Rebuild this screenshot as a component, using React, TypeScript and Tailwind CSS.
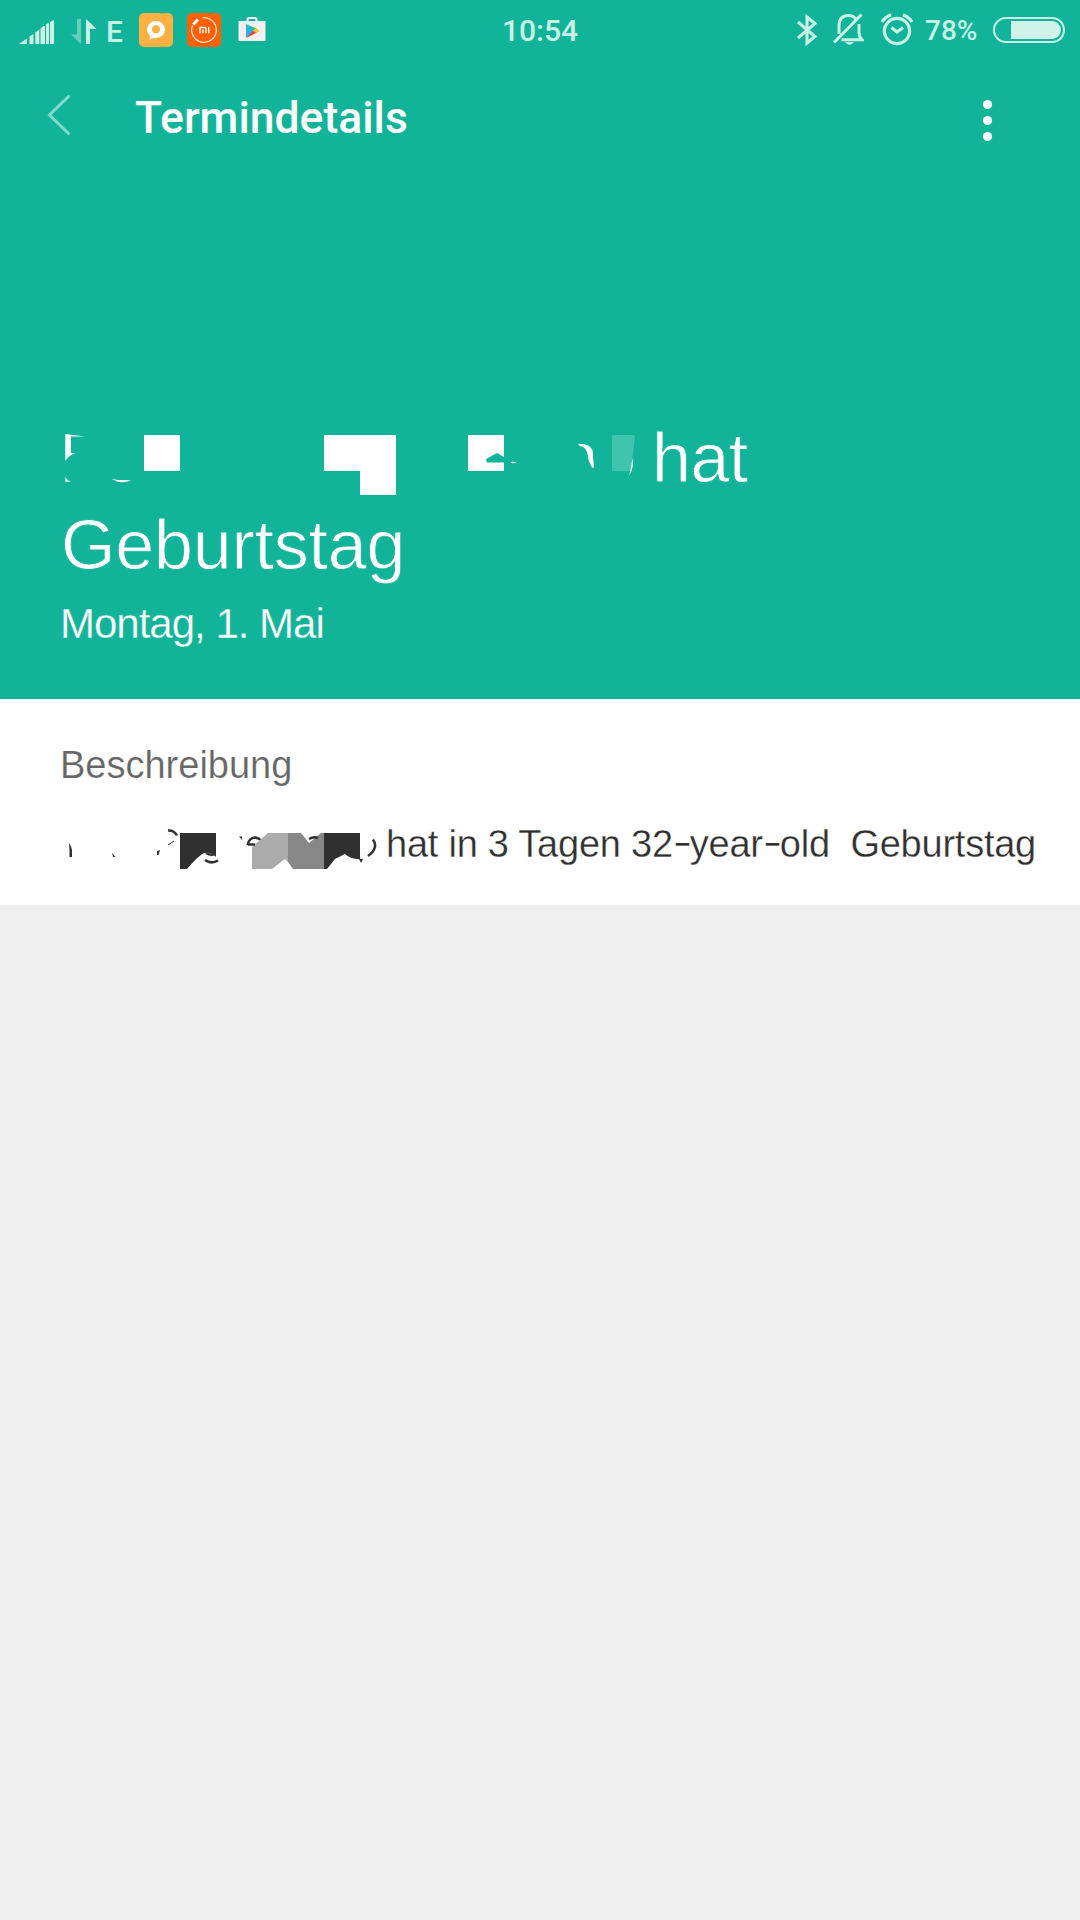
const StatusLeft = () => {
    return (
        <div className="flex items-center h-[60px] pl-[19px] w-[502px]">
            {/* signal */}
            <svg className="w-[36px] h-[60px] mr-[16px]" viewBox="19 0 36 60" fill="#c9f2e6">
                <path d="M19 44L27 38.5V44ZM29.5 44V36.5L33.5 34V44ZM35.3 44V32.5L39.3 29.5V44ZM40.500 44V28.5L43.5 26H45V44ZM46 44V24.5L49 22.5V44ZM50 44V22L54 20V44Z" />
            </svg>
            {/* data arrows */}
            <svg className="w-[26px] h-[60px] mr-[10px]" viewBox="71 0 26 60">
                <path d="M77 19H81V44L71 34.5H77Z" fill="#66d0bc" />
                <path d="M86 19L96.500 29H90V44H86Z" fill="#c9f2e6" />
            </svg>
            <p className="font-[Roboto] font-medium text-[30px] leading-[60px] pt-[3px] w-[32px] -indent-[1px] text-[#c9f2e6]">E</p>
            <svg className="w-[34px] h-[60px] mr-[14px]" viewBox="139 0 34 60">
                <rect x="139" y="13" width="34" height="34" rx="5" fill="#fbb03f" />
                <path d="M156 21a9 8.500 0 0 1 0 17q-2.500 0-4 .2l-2.200 1.800v-4.500a9 8.500 0 0 1 6.200-14.500Z" fill="#fff" />
                <circle cx="156" cy="29.300" r="4" fill="#fbb03f" />
            </svg>
            <svg className="w-[34px] h-[60px] mr-[17px]" viewBox="187 0 34 60">
                <rect x="187" y="13" width="34" height="34" rx="5" fill="#ff6000" />
                <path d="M202.500 17.800A12.300 12.300 0 1 1 192.600 25.500" fill="none" stroke="#ffe0cc" strokeWidth="1.300" />
                <path d="M193.300 24.500L198 19.500" stroke="#fff" strokeWidth="3" />
                <path d="M200 33.300V27.500H204.500Q206 27.500 206 29V33.300M203 29.500V33.300M208.700 27V33.300" fill="none" stroke="#fff" strokeWidth="1.400" />
            </svg>
            <svg className="w-[28px] h-[60px]" viewBox="238 0 28 60">
                <path d="M247.500 22V19.500Q247.500 18 249 18H255Q256.500 18 256.500 19.500V22" fill="none" stroke="#eefaf7" strokeWidth="2" />
                <path d="M238.500 21H265.500V41H238.500Z" fill="#f1f1f1" />
                <path d="M246 24L254 31 246 38Z" fill="#2bb3e8" />
                <path d="M246 24L256 28.500 253 31Z" fill="#1fc08a" />
                <path d="M256 28L259.500 31 256 33.500 252.500 31Z" fill="#fbc02d" />
                <path d="M246 38L256 33 253 30.800Z" fill="#e5394f" />
            </svg>
        </div>
    );
}

const StatusRight = () => {
    return (
        <div className="flex items-center h-[60px]">
            <svg className="w-[22px] h-[60px] mr-[14px]" viewBox="796 0 22 60" fill="none" stroke="#c9f2e6" strokeWidth="3">
                <path d="M798 22L815 36.500 807 43V17L815 23.500 798 38" />
            </svg>
            {/* muted bell */}
            <svg className="w-[32px] h-[60px] mr-[16px]" viewBox="832 0 32 60" fill="none" stroke="#c9f2e6" strokeWidth="3">
                <path d="M839 34V26Q839 15.500 848.500 15.500Q853 15.500 855.500 18.500M859 24V33Q859 37 862 39.700H841.500M834 42.500L861.500 14.500" />
                <path d="M845 42H854Q849.500 47.500 845 42Z" fill="#c9f2e6" stroke="none" />
            </svg>
            {/* alarm */}
            <svg className="w-[34px] h-[60px] mr-[11px]" viewBox="880 0 34 60" fill="none" stroke="#c9f2e6" strokeWidth="3.200">
                <circle cx="897" cy="31" r="12.600" />
                <path d="M882 22Q885 17 891 14.700M903 14.700Q909 17 912 22M891.500 27.500L897 32 903 27.500" />
            </svg>
            <p className="font-[Roboto] font-medium text-[28px] leading-[60px] pt-[2px] w-[67px] text-[#c9f2e6]">78%</p>
            <svg className="w-[74px] h-[60px]" viewBox="992 0 74 60">
                <rect x="994" y="18" width="70" height="24" rx="12" fill="none" stroke="#c9f2e6" strokeWidth="2" />
                <path d="M1011 21H1052A9 9 0 0 1 1052 39H1011Z" fill="#cff3e9" />
            </svg>
        </div>
    );
}

// name in the headline, blocked out
const HiddenName = () => {
    return (
        <svg className="w-[592px] h-[80px] shrink-0" viewBox="60 425 592 80" fill="#fff">
            <path d="M65.300 434L75 435.300 85 436.600H71V453L75.700 453.300Q69 455 65.300 461ZM65.300 477Q67 480.500 71 481.700H65.300Z" />
            <path d="M111.500 479L118 480 131 480.300Q122 485 111.500 479Z" />
            <path d="M144 435H180V471H144ZM324 435H396V495H360V471H324Z" />
            <path d="M468 435H504V457L497 453 486 459 487 462.500H504V471H468Z" />
            <ellipse cx="513.500" cy="462.500" rx="3" ry="0.800" />
            <path d="M578 444H583Q594.500 446 593 457L594 467 592.500 468Q588 461 588 456Q586 446 580 446Z" />
            <path d="M612 435H635L631 471H612Z" fill="#41c4ae" />
            <path d="M632.500 458Q634.500 466 629 476Q631.500 466 632.500 458Z" />
        </svg>
    );
}

const HiddenNameSmall = () => {
    return (
        <svg className="w-[326px] h-[60px] shrink-0" viewBox="60 820 326 60" fill="#303030">
            <path d="M69 843Q71.500 846 72 850V857H69.500V850ZM112 853L115.500 857H113ZM157 851L160 850 158.500 855H157ZM239 836.500H242V840Z" />
            <path d="M180 833H216V857Q212 852 204 853Q198 856 187 869H180Z" />
            <path d="M252 847L268 833H288V862L285 859 272 869H252Z" fill="#ababab" />
            <path d="M288 833H301L309 843 321 833H324V869H293L288 862Z" fill="#878787" />
            <path d="M324 833H360V859H363L361 863 359 859Q350 859 345 854L335 859 327 869H324Z" />
            <path d="M168 830.500Q174 830 177 835.500M205 860Q211 864.500 218 860.500M206 853Q211 856 215 854M247.500 845Q249 838 255 837.500Q259 838 260 840M248 844.500H255M309 839Q314 836 318 838M373 839.500Q379 848 368 856" fill="none" stroke="#303030" strokeWidth="2.500" />
            <path d="M174 841L168 845" stroke="#303030" strokeWidth="1" />
        </svg>
    );
}

const Dash = () => {
    return <span className="inline-block w-[17px] scale-x-150 origin-left -translate-y-[2px]">-</span>;
}

const App = () => {
    return (
        <div className="w-[1080px] h-[1920px] bg-[#efefef] font-['Liberation_Sans',Arial,sans-serif] overflow-hidden">
            <div className="h-[699px] bg-[#12b499] text-white">
                <div className="flex h-[60px]">
                    <StatusLeft />
                    <p className="font-[Roboto] font-medium text-[30px] leading-[62px] w-[294px] text-[#c9f2e6]">10:54</p>
                    <StatusRight />
                </div>

                <div className="flex h-[120px] items-start">
                    <svg className="w-[30px] h-[50px] ml-[45px] mt-[30px]" viewBox="45 90 30 50" fill="none">
                        <path d="M68.500 96.500L49.500 115 68.500 133.500" stroke="#84d9ca" strokeWidth="3" strokeLinecap="round" />
                    </svg>
                    <p className="font-[Roboto] font-medium text-[44.5px] leading-[60px] ml-[60px] mt-[28px] w-[842px]">Termindetails</p>
                    <svg className="w-[20px] h-[50px] mt-[35px]" viewBox="977 95 20 50" fill="#fff">
                        <circle cx="987.500" cy="104.500" r="4.600" />
                        <circle cx="987.500" cy="120.500" r="4.600" />
                        <circle cx="987.500" cy="136.500" r="4.600" />
                    </svg>
                </div>

                <div className="pl-[60px] pt-[245px] [-webkit-text-stroke:0.8px_#12b499]">
                    <div className="flex h-[80px]">
                        <HiddenName />
                        <p className="text-[70px] leading-[80px] mt-[-7px] tracking-[-0.5px]">hat</p>
                    </div>
                    <p className="text-[70px] leading-[80px] tracking-[-0.2px] indent-[1px]">Geburtstag</p>
                    <p className="text-[42px] leading-[50px] mt-[14px] tracking-[-1px] [-webkit-text-stroke:0.3px_#12b499]">Montag, 1. Mai</p>
                </div>
            </div>

            <div className="h-[206px] bg-white pl-[60px] pt-[41px]">
                <p className="text-[38px] leading-[50px] text-[#666] [-webkit-text-stroke:0.2px_#fff]">Beschreibung</p>
                <div className="flex h-[60px] mt-[30px]">
                    <HiddenNameSmall />
                    <p className="text-[38px] leading-[48px] tracking-[-0.24px] text-[#303030] whitespace-pre [-webkit-text-stroke:0.3px_#fff]">hat in 3 Tagen 32<Dash />year<Dash />old  Geburtstag</p>
                </div>
            </div>
        </div>
    );
}

export default App
